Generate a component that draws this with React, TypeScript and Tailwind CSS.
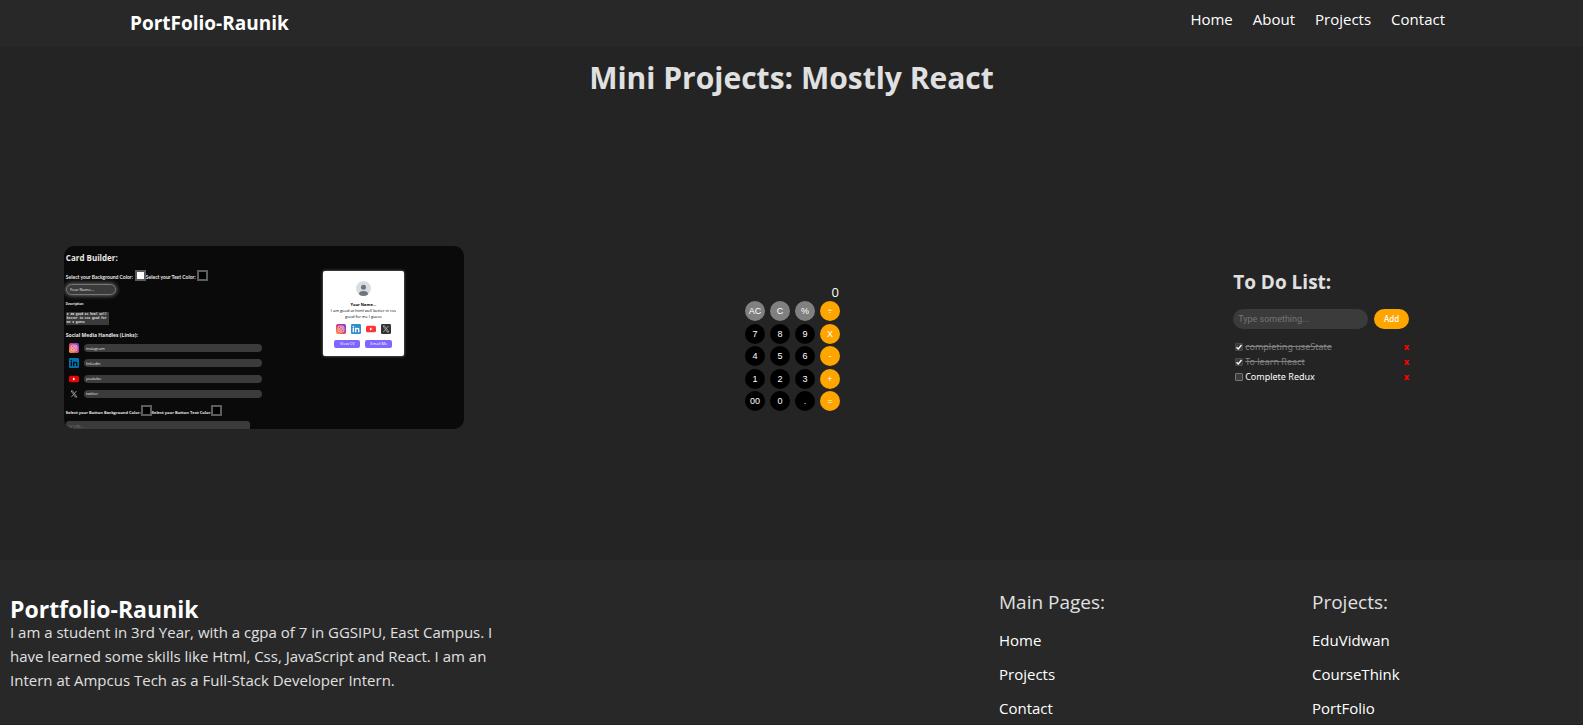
import React from "react";

const navLinks = ["Home", "About", "Projects", "Contact"];
const footerColumns = [
  { title: "Main Pages:", links: ["Home", "Projects", "Contact"] },
  { title: "Projects:", links: ["EduVidwan", "CourseThink", "PortFolio"] },
];
const keys = [
  "AC", "C", "%", "÷",
  "7", "8", "9", "X",
  "4", "5", "6", "-",
  "1", "2", "3", "+",
  "00", "0", ".", "=",
];
const todos = [
  { text: "completing useState", done: true },
  { text: "To learn React", done: true },
  { text: "Complete Redux", done: false },
];
const networks = ["instagram", "linkedin", "youtube", "twitter"];

function SocialIcon({ name }: { name: string }) {
  if (name === "instagram") {
    return (
      <svg viewBox="0 0 24 24" className="size-full">
        <defs>
          <linearGradient id="ig" x1="0" y1="1" x2="1" y2="0">
            <stop offset="0" stopColor="#fdb84a" />
            <stop offset="0.3" stopColor="#ee5a4a" />
            <stop offset="0.65" stopColor="#c2349c" />
            <stop offset="1" stopColor="#5a4fd0" />
          </linearGradient>
        </defs>
        <rect width="24" height="24" rx="4" fill="url(#ig)" />
        <rect x="5" y="5" width="14" height="14" rx="4" fill="none" stroke="#fff" strokeWidth="1.6" />
        <circle cx="12" cy="12" r="3.4" fill="none" stroke="#fff" strokeWidth="1.6" />
        <circle cx="16.2" cy="7.8" r="1" fill="#fff" />
      </svg>
    );
  }
  if (name === "youtube") {
    return (
      <svg viewBox="0 0 24 24" className="size-full">
        <rect x="0" y="4" width="24" height="16" rx="4" fill="var(--yt-bg)" />
        <path d="M9.5 8.3v7.4l6-3.7z" fill="#fff" />
      </svg>
    );
  }
  if (name === "linkedin") {
    return (
      <svg viewBox="0 0 24 24" className="size-full">
        <rect width="24" height="24" rx="3" fill="var(--in-bg)" />
        <path
          d="M4 9.2h3.4V20H4zM5.7 4a2 2 0 1 1 0 4 2 2 0 0 1 0-4zM9.6 9.2h3.2v1.5c.6-1 1.8-1.8 3.4-1.8 3.2 0 4 2.1 4 5V20h-3.4v-5.4c0-1.5-.3-2.9-1.9-2.9-1.7 0-2 1.3-2 2.8V20H9.6z"
          fill="var(--in-fg)"
        />
      </svg>
    );
  }
  return (
    <svg viewBox="0 0 24 24" className="size-full">
      <rect width="24" height="24" rx="3" fill="var(--x-bg)" />
      <path d="M5 4.5h3.8l10.2 15h-3.8zM18.5 4.5l-6 6.7M5.3 19.5l6-6.6" fill="none" stroke="#d0d0d0" strokeWidth="1.5" />
    </svg>
  );
}

function ColorBox({ label, white = false }: { label: string; white?: boolean }) {
  return (
    <div className="flex grow items-end justify-between whitespace-nowrap">
      <span>{label}</span>
      <button
        type="button"
        aria-label={label}
        className={`size-[11px] shrink-0 border-2 border-[#5c5c5c] ${white ? "bg-white" : "bg-black"}`}
      />
    </div>
  );
}

function CardBuilder() {
  return (
    <article className="flex h-[183px] w-[400px] overflow-hidden rounded-[10px] bg-[#0a0a0a] pl-[2px] text-[#e8e8e8]">
      <div className="w-[200px] shrink-0 text-[5px] leading-[7px] font-bold [--in-bg:#0073b1] [--in-fg:#0a0a0a] [--x-bg:#0a0a0a] [--yt-bg:#e60505]">
        <h2 className="mt-[6px] text-[8px] leading-[12px]">Card Builder:</h2>
        <div className="mt-[6px] flex h-[11px] font-['Lato','Open_Sans',sans-serif] text-[5px]">
          <div className="flex w-[80px]"><ColorBox label="Select your Background Color:" white /></div>
          <div className="flex w-[62px]"><ColorBox label="Select your Text Color:" /></div>
        </div>
        <input
          aria-label="Your name"
          defaultValue="Your Name..."
          className="mt-[3px] block h-[11px] w-[50px] rounded-full border border-[#777] bg-[#3b3b3b] px-[3px] text-[4px] font-normal shadow-[0_0_4px_1px_#666]"
        />
        <label htmlFor="description" className="mt-[6px] block text-[3px]">Description:</label>
        <textarea
          id="description"
          defaultValue={"I am good at html well\nbetter in css good for\nme I guess"}
          className="mt-[4px] block h-[13px] w-[43px] resize-none overflow-hidden bg-[#3b3b3b] px-px pt-px font-['Liberation_Mono',monospace] text-[3px] leading-[4px] whitespace-pre"
        />
        <h3 className="mt-[7px]">Social Media Handles (Links):</h3>
        <div className="mt-[4px] flex h-[56px] flex-col justify-between">
          {networks.map((n) => (
            <div key={n} className="flex h-[10px] items-center gap-[5px] pl-[3px]">
              <span className="size-[10px]"><SocialIcon name={n} /></span>
              <input
                aria-label={n}
                defaultValue={n}
                className="h-[8px] w-[178px] rounded-full bg-[#3b3b3b] px-[2px] text-[4px] leading-[6px] font-normal"
              />
            </div>
          ))}
        </div>
        <div className="mt-[6px] flex h-[11px] text-[4px]">
          <div className="flex w-[86px]"><ColorBox label="Select your Button Background Color:" /></div>
          <div className="flex w-[68px]"><ColorBox label="Select your Button Text Color:" /></div>
        </div>
        <input
          aria-label="CV URL"
          placeholder="CV URL..."
          className="mt-[5px] block h-[10px] w-[184px] rounded-[3px] bg-[#3b3b3b] px-[2px] text-[4px] font-normal placeholder:text-[#777]"
        />
      </div>
      <div className="mt-[25px] ml-[57px] flex h-[85px] w-[81px] shrink-0 flex-col items-center rounded-[2px] bg-white pt-[10px] text-center text-[4px] leading-[6px] text-black shadow-[0_0_3px_#888] [--in-bg:#2f8fce] [--in-fg:#ffffff] [--x-bg:#333333] [--yt-bg:#ff3333]">
        <svg viewBox="0 0 30 30" className="size-[15px]">
          <clipPath id="face"><circle cx="15" cy="15" r="15" /></clipPath>
          <g clipPath="url(#face)">
            <rect width="30" height="30" fill="#d9dce1" />
            <circle cx="15" cy="12.5" r="5" fill="#6e757d" />
            <path d="M6 30v-4q0-6 9-6t9 6v4z" fill="#6e757d" />
          </g>
        </svg>
        <b className="mt-[6px]">Your Name...</b>
        <p>I am good at html well better in css<br />good for me I guess</p>
        <div className="mt-[4px] flex gap-[5px]">
          {networks.map((n) => (
            <span key={n} className="size-[10px]"><SocialIcon name={n} /></span>
          ))}
        </div>
        <div className="mt-[6px] flex gap-[5px] text-white">
          <button type="button" className="h-[8px] w-[26px] rounded-[2px] bg-[#8066ff]">View CV</button>
          <button type="button" className="h-[8px] w-[27px] rounded-[2px] bg-[#8066ff]">Email Me</button>
        </div>
      </div>
    </article>
  );
}

function Calculator() {
  return (
    <article className="flex h-[183px] w-[400px] flex-col items-center pt-[38px] pl-[2px] font-['Liberation_Sans',sans-serif] text-white">
      <output className="w-[95px] pr-px text-right font-['Open_Sans',sans-serif] text-[13px] leading-[17px]">0</output>
      <div className="grid h-[110px] w-[95px] grid-cols-4 content-between gap-x-[5px]">
        {keys.map((k, i) => {
          const tone = i % 4 === 3 ? "bg-[#ffa500]" : i < 3 ? "bg-[#808080]" : "bg-black";
          return (
            <button type="button" key={k} className={`size-5 rounded-full text-[9px] leading-[20px] ${tone}`}>
              {k}
            </button>
          );
        })}
      </div>
    </article>
  );
}

function TodoList() {
  return (
    <article className="h-[183px] w-[400px] pt-[22px] pl-[114px] font-['Noto_Sans',sans-serif] text-[9px]">
      <h2 className="font-['Open_Sans',sans-serif] text-[19px] leading-[28px] font-bold">To Do List:</h2>
      <form className="mt-[13px] flex gap-[6px]" onSubmit={(e) => e.preventDefault()}>
        <input
          aria-label="New task"
          placeholder="Type something..."
          className="h-[20px] w-[135px] rounded-full bg-[#3b3b3b] px-[5px] font-['Roboto',sans-serif] text-[9px] leading-[18px] placeholder:text-[#757575]"
        />
        <button className="h-[20px] w-[35px] rounded-full bg-[#ffa500] text-[8px] leading-[18px] font-medium text-white">Add</button>
      </form>
      <ul className="mt-[10px] w-[176px]">
        {todos.map((t) => (
          <li key={t.text} className="flex h-[15px] items-center">
            <label className={`flex grow items-center gap-[2px] ${t.done ? "text-[#808080] line-through" : "text-white"}`}>
              <span className="ml-[2px] grid size-[8px] *:col-start-1 *:row-start-1">
                <input
                  type="checkbox"
                  defaultChecked={t.done}
                  className="peer size-[8px] appearance-none rounded-[1px] border border-[#757575] bg-[#3b3b3b] checked:border-[#484848]"
                />
                <svg viewBox="0 0 8 8" className="pointer-events-none invisible size-[8px] peer-checked:visible">
                  <path d="M1.5 4.2l1.8 1.8L6.5 2" fill="none" stroke="#fff" strokeWidth="1.3" />
                </svg>
              </span>
              {t.text}
            </label>
            <button type="button" aria-label={`Remove ${t.text}`} className="text-[9px] font-extrabold text-[#f00]">x</button>
          </li>
        ))}
      </ul>
    </article>
  );
}

export default function App() {
  return (
    <div className="flex min-h-screen flex-col bg-[#242424] font-['Open_Sans','Noto_Sans',sans-serif] text-[15px] leading-[24px] text-[#e0e0e0]">
      <header className="flex h-[47px] shrink-0 justify-between bg-[#282828] pr-[138px] pl-[130px] text-white">
        <h1 className="pt-[11px] text-[19px] leading-[24px] font-bold">PortFolio-Raunik</h1>
        <nav className="flex gap-5 pt-[7px]">
          {navLinks.map((l) => <a key={l} href="#">{l}</a>)}
        </nav>
      </header>
      <main className="flex flex-col pb-[131px]">
        <h2 className="pt-[7px] text-center text-[30px] leading-[48px] font-bold">Mini Projects: Mostly React</h2>
        <div className="mt-[144px] flex justify-around">
          <CardBuilder />
          <Calculator />
          <TodoList />
        </div>
      </main>
      <footer className="flex grow border-b border-[#271d24] bg-[#282828] pl-[10px]">
        <section className="grow pt-[38px]">
          <h2 className="text-[23px] leading-[22px] font-bold text-white">Portfolio-Raunik</h2>
          <p className="w-[500px]">
            I am a student in 3rd Year, with a cgpa of 7 in GGSIPU, East Campus. I have learned some skills like Html, Css, JavaScript and React. I am an Intern at Ampcus Tech as a Full-Stack Developer Intern.
          </p>
        </section>
        <div className="grid w-[584px] shrink-0 grid-cols-[313px_1fr]">
          {footerColumns.map((c) => (
            <nav key={c.title} className="pt-[28px]">
              <h3 className="text-[19px] leading-[28px]">{c.title}</h3>
              <ul className="mt-[12px] flex flex-col gap-[10px] text-white">
                {c.links.map((l) => <li key={l}><a href="#">{l}</a></li>)}
              </ul>
            </nav>
          ))}
        </div>
      </footer>
    </div>
  );
}
